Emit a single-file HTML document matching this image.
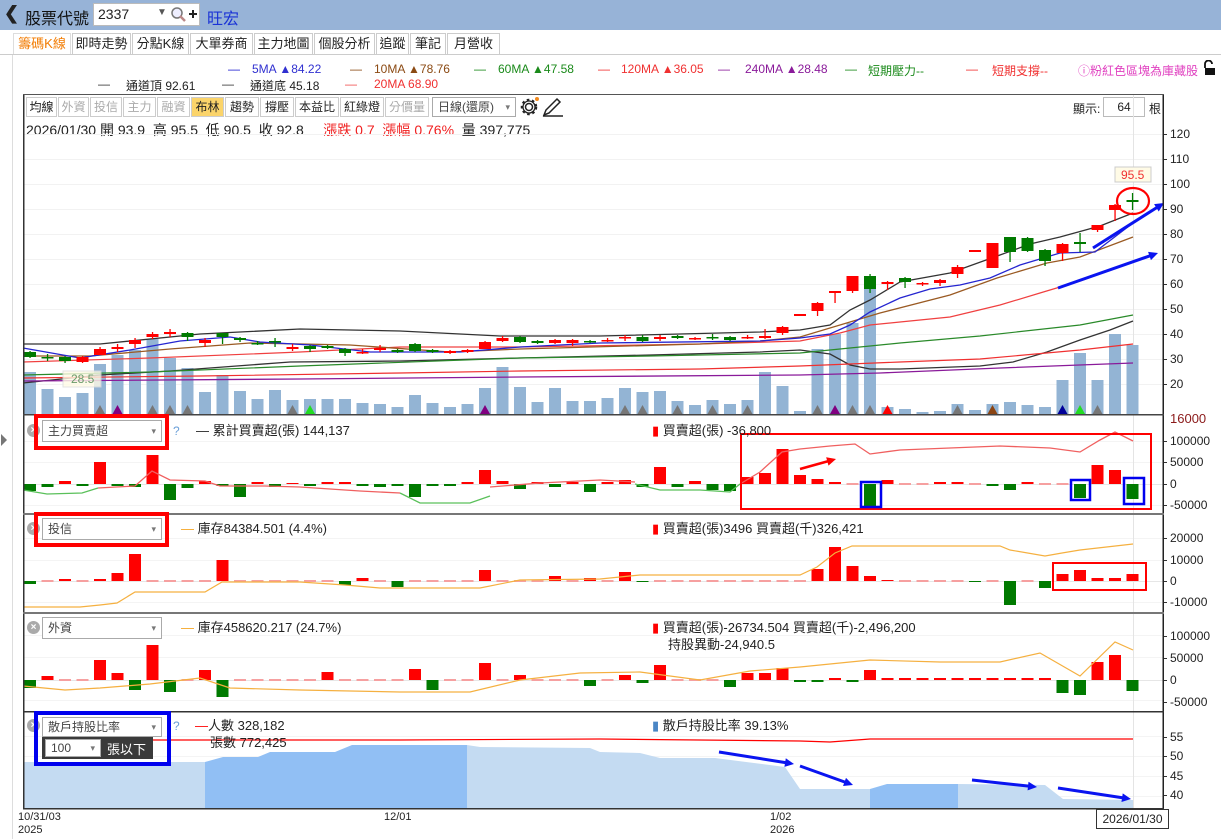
<!DOCTYPE html>
<html><head><meta charset="utf-8"><style>
*{margin:0;padding:0;box-sizing:border-box}
body{width:1221px;height:839px;overflow:hidden;background:#fff;font-family:"Liberation Sans","Noto Sans CJK TC",sans-serif;position:relative;color:#222}
.a{position:absolute;white-space:nowrap}
#top{position:absolute;left:0;top:0;width:1221px;height:30px;background:#97b3d7}
.tab{position:absolute;top:33px;height:21px;border:1px solid #ccc;border-bottom:none;background:#fff;font-size:13px;line-height:20px;text-align:center;color:#222}
.btn{position:absolute;top:97px;height:20px;border:1px solid #ccc;background:#fff;font-size:12px;line-height:18px;text-align:center;color:#222}
.dis{color:#aaa}
.sel{position:absolute;border:1px solid #aaa;background:#fff;font-size:12px;line-height:18px;padding-left:5px;color:#444}
.sel:after{content:"▾";position:absolute;right:5px;top:0;color:#777;font-size:9px}
.ax{position:absolute;font-size:12px;color:#222}
.xc{position:absolute;width:13px;height:13px;border-radius:50%;background:#aaa;color:#fff;font-size:10px;line-height:13px;text-align:center;font-weight:bold}
</style></head><body>
<div id="top"></div>
<div class="a" style="left:4px;top:3px;font-size:18px;font-weight:bold">&#10094;</div>
<div class="a" style="left:25px;top:5px;font-size:16px;color:#111">股票代號</div>
<div class="a" style="left:93px;top:3px;width:107px;height:23px;background:#fff;border:1px solid #bbb"></div>
<div class="a" style="left:98px;top:6px;font-size:14px">2337</div>
<div class="a" style="left:157px;top:7px;font-size:10px;color:#555">▼</div>
<svg class="a" style="left:170px;top:6px" width="28" height="18"><circle cx="7" cy="7" r="5" fill="#eef" stroke="#777" stroke-width="1.5"/><line x1="10" y1="10" x2="15" y2="15" stroke="#b88" stroke-width="2.5"/><line x1="19" y1="8" x2="27" y2="8" stroke="#222" stroke-width="2"/><line x1="23" y1="4" x2="23" y2="12" stroke="#222" stroke-width="2"/></svg>
<div class="a" style="left:207px;top:5px;font-size:16px;color:#1a33d6">旺宏</div>

<div class="a" style="left:0;top:54px;width:1221px;height:1px;background:#ccc"></div>
<div class="tab" style="left:13px;width:58px;color:#f27b00;border-color:#ddd">籌碼K線</div>
<div class="tab" style="left:72px;width:59px">即時走勢</div>
<div class="tab" style="left:132px;width:57px">分點K線</div>
<div class="tab" style="left:190px;width:63px">大單券商</div>
<div class="tab" style="left:254px;width:59px">主力地圖</div>
<div class="tab" style="left:314px;width:61px">個股分析</div>
<div class="tab" style="left:376px;width:33px">追蹤</div>
<div class="tab" style="left:410px;width:36px">筆記</div>
<div class="tab" style="left:447px;width:53px">月營收</div>
<div class="a" style="left:12px;top:55px;width:1px;height:784px;background:#ddd"></div>

<div class="a" style="top:62px;font-size:12px;left:0;width:1221px;height:14px">
<span class="a" style="left:228px;color:#1f1fd0">—</span><span class="a" style="left:252px;color:#3030d0">5MA ▲84.22</span>
<span class="a" style="left:350px;color:#8b4a13">—</span><span class="a" style="left:374px;color:#8b4a13">10MA ▲78.76</span>
<span class="a" style="left:474px;color:#1a8a1a">—</span><span class="a" style="left:498px;color:#1a8a1a">60MA ▲47.58</span>
<span class="a" style="left:598px;color:#f03030">—</span><span class="a" style="left:621px;color:#f03030">120MA ▲36.05</span>
<span class="a" style="left:718px;color:#8a1a9a">—</span><span class="a" style="left:745px;color:#8a1a9a">240MA ▲28.48</span>
<span class="a" style="left:845px;color:#1a8a1a">—</span><span class="a" style="left:868px;color:#1a8a1a">短期壓力--</span>
<span class="a" style="left:966px;color:#f03030">—</span><span class="a" style="left:992px;color:#f03030">短期支撐--</span>
<span class="a" style="left:1078px;color:#e040c0">ⓘ粉紅色區塊為庫藏股</span>
</div>
<svg class="a" style="left:1202px;top:60px" width="14" height="16"><path d="M3 8 V4 A3.5 3.5 0 0 1 10 4" fill="none" stroke="#111" stroke-width="1.8"/><rect x="3" y="8" width="10" height="7" fill="#111"/></svg>
<div class="a" style="top:77px;font-size:12px;left:0;width:1221px;height:14px">
<span class="a" style="left:98px;color:#333">—</span><span class="a" style="left:126px">通道頂 92.61</span>
<span class="a" style="left:222px;color:#333">—</span><span class="a" style="left:250px">通道底 45.18</span>
<span class="a" style="left:345px;color:#f05050">—</span><span class="a" style="left:374px;color:#f03030">20MA 68.90</span>
</div>

<div class="a" style="left:23px;top:94px;width:1141px;height:1px;background:#555"></div>
<div class="btn" style="left:26px;width:31px">均線</div>
<div class="btn dis" style="left:58px;width:31px">外資</div>
<div class="btn dis" style="left:90px;width:32px">投信</div>
<div class="btn dis" style="left:123px;width:33px">主力</div>
<div class="btn dis" style="left:157px;width:33px">融資</div>
<div class="btn" style="left:191px;width:33px;background:#fbd46a">布林</div>
<div class="btn" style="left:225px;width:34px">趨勢</div>
<div class="btn" style="left:260px;width:34px">撐壓</div>
<div class="btn" style="left:295px;width:44px">本益比</div>
<div class="btn" style="left:340px;width:44px">紅綠燈</div>
<div class="btn dis" style="left:385px;width:44px">分價量</div>
<div class="sel" style="left:432px;top:97px;width:84px;height:20px">日線(還原)</div>
<svg class="a" style="left:519px;top:96px" width="46" height="22"><circle cx="10" cy="11" r="3.5" fill="none" stroke="#222" stroke-width="1.5"/><circle cx="10" cy="11" r="7" fill="none" stroke="#222" stroke-width="2.5" stroke-dasharray="2.5 2.6"/><circle cx="10" cy="11" r="6" fill="none" stroke="#222" stroke-width="1.3"/><circle cx="18" cy="3" r="2" fill="#f28a1e"/><path d="M25 19 L27 14 L38 3 L41 6 L30 17 Z" fill="none" stroke="#222" stroke-width="1.5"/><line x1="24" y1="20" x2="44" y2="20" stroke="#222" stroke-width="1.5"/></svg>
<div class="a" style="left:1073px;top:100px;font-size:12px">顯示:</div>
<div class="a" style="left:1103px;top:97px;width:42px;height:20px;border:1px solid #bbb;font-size:12px;line-height:18px;text-align:center">64</div>
<div class="a" style="left:1149px;top:100px;font-size:12px">根</div>
<div class="a" style="left:26px;top:120px;font-size:14px">2026/01/30 開 93.9&nbsp; 高 95.5&nbsp; 低 90.5&nbsp; 收 92.8&nbsp;&nbsp;&nbsp;&nbsp; <span style="color:#f02020">漲跌 0.7&nbsp; 漲幅 0.76%</span>&nbsp; 量 397,775</div>

<svg id="ch" class="a" style="left:0;top:0" width="1221" height="839"></svg>

<div class="xc" style="left:27px;top:424px">×</div>
<div class="sel" style="left:42px;top:420px;width:120px;height:22px;line-height:20px">主力買賣超</div>
<div class="a" style="left:173px;top:424px;font-size:12px;color:#6a9fd8">?</div>
<div class="a" style="left:196px;top:420px;font-size:13px">— 累計買賣超(張) 144,137</div>
<div class="a" style="left:652px;top:420px;font-size:13px"><span style="color:#f00">▮</span> 買賣超(張) -36,800</div>

<div class="xc" style="left:27px;top:522px">×</div>
<div class="sel" style="left:42px;top:518px;width:120px;height:22px;line-height:20px">投信</div>
<div class="a" style="left:181px;top:518px;font-size:13px"><span style="color:#f5a623">—</span> 庫存84384.501 (4.4%)</div>
<div class="a" style="left:652px;top:518px;font-size:13px"><span style="color:#f00">▮</span> 買賣超(張)3496 買賣超(千)326,421</div>

<div class="xc" style="left:27px;top:621px">×</div>
<div class="sel" style="left:42px;top:617px;width:120px;height:22px;line-height:20px">外資</div>
<div class="a" style="left:181px;top:617px;font-size:13px"><span style="color:#f5a623">—</span> 庫存458620.217 (24.7%)</div>
<div class="a" style="left:652px;top:617px;font-size:13px"><span style="color:#f00">▮</span> 買賣超(張)-26734.504 買賣超(千)-2,496,200</div>
<div class="a" style="left:668px;top:634px;font-size:13px">持股異動-24,940.5</div>

<div class="xc" style="left:27px;top:719px">×</div>
<div class="a" style="left:173px;top:719px;font-size:12px;color:#6a9fd8">?</div>
<div class="a" style="left:195px;top:715px;font-size:13px"><span style="color:#f00">—</span>人數 328,182</div>
<div class="a" style="left:210px;top:732px;font-size:13px">張數 772,425</div>
<div class="a" style="left:652px;top:715px;font-size:13px"><span style="color:#4a86c5">▮</span> 散戶持股比率 39.13%</div>
<div class="a" style="left:34px;top:711px;width:137px;height:55px;border:4px solid #0000ee"></div>
<div class="sel" style="left:42px;top:717px;width:120px;height:20px">散戶持股比率</div>
<div class="a" style="left:42px;top:737px;width:111px;height:22px;background:#3a3a3a"></div>
<div class="sel" style="left:45px;top:739px;width:56px;height:18px;line-height:16px">100</div>
<div class="a" style="left:107px;top:739px;font-size:13px;color:#fff">張以下</div>

<div class="a" style="left:34px;top:414px;width:135px;height:36px;border:4px solid #f00"></div>
<div class="a" style="left:34px;top:512px;width:135px;height:35px;border:4px solid #f00"></div>

<div class="a" style="left:18px;top:811px;font-size:11px">10/31/03</div>
<div class="a" style="left:18px;top:824px;font-size:11px">2025</div>
<div class="a" style="left:384px;top:811px;font-size:11px">12/01</div>
<div class="a" style="left:770px;top:811px;font-size:11px">1/02</div>
<div class="a" style="left:770px;top:824px;font-size:11px">2026</div>
<div class="a" style="left:1096px;top:809px;width:73px;height:20px;border:1px solid #333;background:#fff;font-size:12px;line-height:18px;text-align:center">2026/01/30</div>
<svg class="a" style="left:0;top:433px" width="8" height="14"><path d="M1 1 L7 7 L1 13 Z" fill="#777"/></svg>

<script>
var s='';
function X(i){return 30+17.5*i}
function L(pts,c,w,op){s+='<polyline points="'+pts+'" fill="none" stroke="'+c+'" stroke-width="'+(w||1.2)+'"'+(op?' opacity="'+op+'"':'')+'/>'}
function R(x,y,w,h,c,extra){s+='<rect x="'+x+'" y="'+y+'" width="'+w+'" height="'+h+'" fill="'+c+'" '+(extra||'')+'/>'}
[134,159,184,209,234,259,284,309,334,359,384].forEach(function(y){R(23,y,1140,1,'#f2f2f2')});
[441,462,505,538,560,602,635,657,700,736,756,776,796].forEach(function(y){R(23,y,1140,1,'#f4f4f4')});
R(1133,95,1,713,'#e4e4e4');
var vol=[372,389,397,393,364,355,350,339,358,368,392,375,391,399,390,400,399,399,399,403,404,407,395,403,407,404,388,367,387,402,388,401,401,398,388,392,391,401,405,400,404,400,372,386,411,349,334,323,288,407,409,412,411,404,410,404,402,405,407,380,353,380,334,345];
vol.forEach(function(v,i){R(X(i)-6,v,12,415-v,'#93b4d4')});
var tri={4:'#777',5:'#800080',7:'#777',8:'#777',9:'#777',15:'#777',16:'#22dd22',26:'#800080',34:'#777',35:'#777',37:'#777',39:'#777',41:'#777',45:'#777',46:'#800080',47:'#777',48:'#777',49:'#f00',53:'#777',55:'#8b4513',59:'#000099',60:'#22dd22',61:'#777'};
for(var k in tri){var x=X(+k);s+='<path d="M'+(x-5)+' 414 L'+x+' 405 L'+(x+5)+' 414Z" fill="'+tri[k]+'"/>'}
L('23,383 100,375 170,371 290,362 400,361 520,358 650,355 760,352 800,350 830,354 850,365 870,369 900,369 980,366 1013,362 1047,352 1080,340 1110,330 1133,321','#333',1.3);
L('23,378 200,376 400,373 520,371 700,369 800,366 900,362 980,359 1080,350 1133,344','#f03030',1.2);
L('23,381 300,379 520,377 800,375 880,373 1000,368 1133,363','#8a1a9a',1.3);
L('23,375 150,372 300,366 520,358 650,356 800,353 900,343 980,336 1080,325 1133,315','#2a8a2a',1.2);
L('23,362 150,358 300,352 400,347 520,347 700,344 800,341 840,333 870,325 900,322 950,317 1000,305 1040,293 1080,281 1133,262','#f04040',1.2);
L('23,356 90,356 170,349 250,343 350,345 450,352 520,349 700,344 760,341 800,337 850,322 880,313 950,295 997,278 1047,263 1080,257 1133,237','#9a5a23',1.3);
L('23,348 80,358 130,350 180,341 230,337 260,342 310,345 370,352 460,352 520,347 600,343 760,341 800,338 830,334 850,325 870,312 900,298 930,289 960,285 990,278 1020,265 1060,253 1095,252 1133,223','#2525d0',1.3);
L('23,344 100,344 200,334 300,329 400,331 500,336 600,336 760,332 800,330 830,325 850,310 870,300 900,282 950,273 1000,255 1030,244 1060,237 1100,226 1133,213','#333',1.3);
var cd=[[0,352,357,'g',351,358],[1,357,358,'g',354,361],[2,357,361,'g',356,363],[3,357,362,'r',356,363],[4,349,355,'r',347,355],[5,347,349,'r',344,352],[6,340,344,'r',338,348],[7,334,337,'r',332,339],[8,332,334,'r',329,337],[9,333,337,'g',332,341],[10,340,343,'r',338,347],[11,333,337,'g',333,344],[12,338,340,'g',337,342],[13,343,344,'g',341,345],[14,341,342,'g',338,347],[15,347,349,'r',344,351],[16,346,349,'g',345,352],[17,346,348,'g',345,349],[18,349,353,'g',348,356],[19,352,353,'r',349,354],[20,348,350,'r',345,352],[21,350,352,'g',349,353],[22,344,351,'g',343,352],[23,350,352,'g',349,353],[24,351,353,'r',350,354],[25,350,352,'r',349,353],[26,342,349,'r',341,349],[27,338,341,'r',336,342],[28,337,342,'g',336,343],[29,341,343,'g',340,344],[30,340,343,'r',339,344],[31,340,343,'r',339,346],[32,341,342,'g',340,343],[33,340,341,'r',338,342],[34,337,338,'r',335,341],[35,337,341,'g',335,342],[36,337,339,'r',335,341],[37,336,338,'g',335,339],[38,338,339,'r',337,340],[39,337,338,'g',334,340],[40,337,340,'g',336,341],[41,337,338,'r',335,339],[42,336,338,'r',329,339],[43,327,333,'r',326,335],[44,314,316,'r',314,316],[45,303,311,'r',302,316],[46,291,293,'r',291,303],[47,276,291,'r',276,293],[48,276,289,'g',274,293],[49,282,284,'r',281,290],[50,278,282,'g',277,288],[51,283,284,'r',282,286],[52,280,283,'r',279,286],[53,267,274,'r',265,278],[54,250,252,'r',250,252],[55,243,268,'r',243,268],[56,237,252,'g',237,262],[57,238,251,'g',237,252],[58,250,261,'g',249,266],[59,244,253,'r',243,261],[60,242,244,'g',233,252],[61,225,230,'r',225,232],[62,205,210,'r',204,221],[63,200,202,'g',193,210]];
cd.forEach(function(c){var x=X(c[0]),col=c[3]=='r'?'#f00':'#007a00';R(x-0.6,c[4],1.3,c[5]-c[4],col);R(x-6,c[1],12,Math.max(1.5,c[2]-c[1]),col)});
s+='<ellipse cx="1133" cy="201" rx="16" ry="13" fill="none" stroke="#f00" stroke-width="2.2"/>';
R(1115,167,36,15,'#fffbe6','stroke="#ccc"');s+='<text x="1121" y="179" font-size="12" fill="#f03030" font-family="Liberation Sans">95.5</text>';
R(63,371,38,16,'#fffbe6','stroke="#ddd" opacity="0.8"');s+='<text x="71" y="383" font-size="12" fill="#6a9a6a" font-family="Liberation Sans">28.5</text>';
function AR(x1,y1,x2,y2,c,w){var a=Math.atan2(y2-y1,x2-x1),h=10;s+='<line x1="'+x1+'" y1="'+y1+'" x2="'+(x2-7*Math.cos(a))+'" y2="'+(y2-7*Math.sin(a))+'" stroke="'+c+'" stroke-width="'+w+'"/>';s+='<path d="M'+x2+' '+y2+' L'+(x2-h*Math.cos(a-0.45))+' '+(y2-h*Math.sin(a-0.45))+' L'+(x2-h*Math.cos(a+0.45))+' '+(y2-h*Math.sin(a+0.45))+'Z" fill="'+c+'"/>'}
AR(1093,248,1164,203,'#0a14f0',3);AR(1058,288,1158,253,'#0a14f0',3);
var pl=[[120,134],[110,159],[100,184],[90,209],[80,234],[70,259],[60,284],[50,309],[40,334],[30,359],[20,384]];
pl.forEach(function(p){R(1163,p[1],4,1,'#333');s+='<text x="1170" y="'+(p[1]+4)+'" font-size="12" fill="#222" font-family="Liberation Sans">'+p[0]+'</text>'});
s+='<text x="1170" y="423" font-size="13" fill="#8b1a1a" font-family="Liberation Sans">16000</text>';
function lab(y,t){R(1163,y,4,1,'#333');s+='<text x="1170" y="'+(y+4)+'" font-size="12" fill="#222" font-family="Liberation Sans">'+t+'</text>'}
lab(441,'100000');lab(462,'50000');lab(484,'0');lab(505,'-50000');
lab(538,'20000');lab(560,'10000');lab(581,'0');lab(602,'-10000');
lab(636,'100000');lab(658,'50000');lab(680,'0');lab(702,'-50000');
lab(737,'55');lab(756,'50');lab(776,'45');lab(795,'40');
function bars(z,arr){arr.forEach(function(v,i){var x=X(i)-6;if(v>0)R(x,z-v,12,v,'#f00');else if(v<0)R(x,z,12,-v,'#007a00');else R(x,z-1,12,2,'#f6a0a0')})}
function zl(z){R(23,z,1140,1,'#e6e6e6')}
zl(484);zl(581);zl(680);
bars(484,[-7,-3,3,-2,22,-2,-3,29,-16,-4,3,-2,-13,2,-3,1,-2,2,2,-2,-3,-2,-13,-2,-2,2,14,3,-5,2,-3,2,-8,2,4,-3,17,-3,3,-6,-7,7,11,35,9,5,2,0,-23,4,0,0,2,2,0,-2,-6,2,0,0,-14,19,14,-15]);
bars(581,[-3,0,2,0,2,8,27,0,0,0,0,21,0,0,0,0,0,0,-4,3,0,-6,0,0,0,0,11,0,0,0,5,0,3,0,9,-1,0,0,0,0,0,0,0,0,0,12,34,15,5,1,0,0,0,0,-1,0,-24,0,-7,7,11,3,3,7]);
bars(680,[-8,4,0,0,20,7,-10,35,-12,0,10,-17,0,0,0,0,0,8,0,0,0,0,11,-10,0,0,17,0,5,0,0,0,-6,0,5,-3,15,0,0,0,-7,7,7,12,-2,-2,2,-2,10,2,2,2,2,2,2,2,2,2,2,-13,-15,18,25,-11]);
L('23,490 47,494 82,493 98,488','#5ac05a',1.3);
L('98,488 135,486 152,471 170,480 205,481 220,486 265,486 300,487 360,491 400,493','#f06060',1.3);
L('400,493 420,503 470,503 490,496','#5ac05a',1.3);
L('490,487 540,483 600,480 635,482','#f06060',1.3);
L('635,484 660,490 700,490 730,492 740,484','#5ac05a',1.3);
L('740,484 760,472 782,452 800,449 830,446 855,444 870,454 900,450 950,448 1000,446 1050,448 1080,452 1100,440 1115,432 1133,441','#f06060',1.3);
AR(800,469,836,459,'#f00',2.5);
L('23,607 80,607 100,605 117,603 135,592 205,592 222,582 300,582 345,585 380,588 480,588 520,580 600,579 640,575 800,575 817,567 835,553 852,546 900,546 1000,546 1010,550 1045,556 1062,553 1080,550 1133,544','#f5b040',1.2);
L('23,686 65,690 100,688 150,684 200,678 230,688 300,690 400,692 470,692 520,680 580,673 640,672 700,680 750,671 800,667 870,660 940,662 1000,662 1040,653 1080,676 1115,642 1133,650','#f5b040',1.2);
s+='<rect x="741" y="434" width="410" height="75" fill="none" stroke="#f00" stroke-width="2"/>';
s+='<rect x="861" y="482" width="20" height="25" fill="none" stroke="#0000ee" stroke-width="2.5"/>';
s+='<rect x="1071" y="480" width="19" height="20" fill="none" stroke="#0000ee" stroke-width="2.5"/>';
s+='<rect x="1124" y="478" width="20" height="26" fill="none" stroke="#0000ee" stroke-width="2.5"/>';
s+='<rect x="1053" y="563" width="93" height="27" fill="none" stroke="#f00" stroke-width="2"/>';
s+='<path d="M23 808 L23 762 L205 762 L205 808Z" fill="#c4dbf2"/>';
s+='<path d="M205 808 L205 762 L223 757 L258 757 L270 752 L335 752 L352 745 L467 745 L467 808Z" fill="#91bff4"/>';
s+='<path d="M467 808 L467 745 L480 747 L590 748 L600 752 L640 753 L660 758 L715 758 L785 767 L800 789 L870 789 L870 808Z" fill="#c4dbf2"/>';
s+='<path d="M870 808 L870 789 L887 784 L958 784 L958 808Z" fill="#91bff4"/>';
s+='<path d="M958 808 L958 784 L1045 785 L1063 799 L1133 800 L1133 808Z" fill="#c4dbf2"/>';
L('140,740 400,740 600,739 800,741 830,742 870,739 1133,739','#f00',1.2);
AR(719,752,794,764,'#0a14f0',3);AR(800,766,853,785,'#0a14f0',3);AR(972,780,1037,787,'#0a14f0',3);AR(1058,788,1131,799,'#0a14f0',3);
R(23,95,1.5,714,'#333');R(1162.5,95,1.5,714,'#222');R(23,808,1141,1.5,'#333');
R(23,414,1141,1.5,'#444');R(23,513,1141,2,'#777');R(23,612,1141,2,'#777');R(23,711,1141,1.5,'#333');
document.getElementById('ch').innerHTML=s;
</script>
</body></html>
